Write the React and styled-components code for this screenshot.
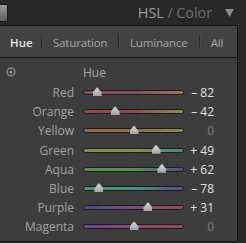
import React from "react";
import styled, { createGlobalStyle } from "styled-components";

const Global = createGlobalStyle`
  html, body { margin: 0; padding: 0; background: #282828; }
  body { width: 246px; height: 243px; overflow: hidden; font-family: "Open Sans", "Liberation Sans", sans-serif; }
`;

const Page = styled.div`
  width: 246px;
  height: 243px;
  background: #282828;
  display: flex;
  flex-direction: column;
`;

const Header = styled.div`
  height: 25px;
  display: flex;
  align-items: center;
`;

const Stub = styled.div`
  width: 7px;
  height: 16px;
  margin-top: 1px;
  background: linear-gradient(#9a9a9a, #5e5e5e);
  border: 1px solid #161616;
  border-left: none;
  border-radius: 0 2px 2px 0;
`;

const Title = styled.div`
  margin-left: auto;
  font-size: 14.5px;
  letter-spacing: -0.1px;
  color: #6f6f6f;
  line-height: 25px;
  margin-top: -1px;
  span { color: #9c9c9c; }
`;

const Arrow = styled.svg`
  margin: 0 12px 0 13px;
  width: 9px;
  height: 8px;
`;

const Panel = styled.div`
  width: 237px;
  border-top: 1px solid #141414;
  border-right: 1px solid #141414;
  border-bottom: 1px solid #141414;
  background: #3d3d3d;
`;

const Tabs = styled.div`
  height: 31px;
  background: #424242;
  border-bottom: 1px solid #161616;
  display: flex;
  align-items: center;
  padding-left: 10px;
`;

const Tab = styled.div`
  width: ${(p) => p.$w}px;
  margin-right: 11px;
  font-size: 11.5px;
  white-space: nowrap;
  letter-spacing: ${(p) => (p.$active ? "0" : "-0.15px")};
  color: ${(p) => (p.$active ? "#e6e6e6" : "#a6a6a6")};
  font-weight: ${(p) => (p.$active ? 600 : 400)};
  margin-top: 1px;
`;

const Sep = styled.div`
  width: 1px;
  height: 14px;
  background: #2c2c2c;
  box-shadow: 1px 0 0 #4a4a4a;
  margin-right: 11px;
`;

const Content = styled.div`
  padding: 6px 0 5px;
  display: grid;
  grid-template-columns: 74px 101px 39px;
  grid-auto-rows: 19.15px;
  align-items: center;
`;

const Label = styled.div`
  font-size: 12px;
  color: #a2a2a2;
  text-align: right;
  width: 74px;
`;

const Icon = styled.svg`
  width: 10px;
  height: 10px;
  margin-left: 6px;
  margin-top: -3px;
`;

const Heading = styled.div`
  font-size: 12px;
  color: #a8a8a8;
  grid-column: 2 / span 2;
  margin-left: 9px;
  margin-top: -2px;
`;

const SliderBox = styled.div`
  position: relative;
  height: 13px;
  margin-left: 9px;
  width: 101px;
  background:
    repeating-linear-gradient(90deg, transparent 0 9px, #343434 9px 10px) 5px 0 / 91px 3px no-repeat,
    repeating-linear-gradient(90deg, transparent 0 9px, #343434 9px 10px) 5px 10px / 91px 3px no-repeat;
`;

const Track = styled.div`
  position: absolute;
  left: 0;
  right: 0;
  top: 4px;
  height: 3px;
  border: 1px solid #1c1c1c;
  border-radius: 3px;
  background: linear-gradient(90deg, ${(p) => p.$from}, ${(p) => p.$mid || p.$from}, ${(p) => p.$to});
`;

const Thumb = styled.div`
  position: absolute;
  top: 1px;
  width: 9px;
  height: 9px;
  margin-left: -4.5px;
  background: linear-gradient(#dcdcdc, #a0a0a0);
  clip-path: polygon(50% 0, 100% 60%, 100% 100%, 0 100%, 0 60%);
`;

const Value = styled.div`
  font-size: 12px;
  text-align: right;
  margin-left: 9px;
  color: ${(p) => (p.$zero ? "#7c7c7c" : "#e2e2e2")};
  white-space: pre;
`;

const rows = [
  { name: "Red", v: -82, from: "#884a5e", to: "#957a5e" },
  { name: "Orange", v: -42, from: "#904a4c", to: "#8a8e4e" },
  { name: "Yellow", v: 0, from: "#8c6a4e", to: "#828e4e" },
  { name: "Green", v: 49, from: "#868e4c", to: "#4c8a80" },
  { name: "Aqua", v: 62, from: "#5a8e4e", to: "#4a528c" },
  { name: "Blue", v: -78, from: "#4c9084", to: "#564c8e" },
  { name: "Purple", v: 31, from: "#4a4a8c", mid: "#844a80", to: "#904a52" },
  { name: "Magenta", v: 0, from: "#6c4a8e", mid: "#8a4a78", to: "#904a50" },
];

const fmt = (v) => (v === 0 ? "0" : v > 0 ? `+ ${v}` : `\u2013 ${-v}`);

export default function App() {
  return (
    <Page>
      <Global />
      <Header>
        <Stub />
        <Title>
          <span>HSL</span> / Color
        </Title>
        <Arrow viewBox="0 0 9 8">
          <polygon points="0,0 9,0 4.5,8" fill="#8c8c8c" />
        </Arrow>
      </Header>
      <Panel>
        <Tabs>
          <Tab $active $w={20}>Hue</Tab>
          <Sep />
          <Tab $w={54}>Saturation</Tab>
          <Sep />
          <Tab $w={59}>Luminance</Tab>
          <Sep />
          <Tab $w={16}>All</Tab>
        </Tabs>
        <Content>
          <Icon viewBox="0 0 10 10">
            <circle cx="5" cy="5" r="4" fill="none" stroke="#8a8a8a" strokeWidth="1.3" />
            <circle cx="5" cy="5" r="1.6" fill="#9a9a9a" />
          </Icon>
          <Heading>Hue</Heading>
          {rows.map((r) => (
            <React.Fragment key={r.name}>
              <Label>{r.name}</Label>
              <SliderBox>
                <Track $from={r.from} $mid={r.mid} $to={r.to} />
                <Thumb style={{ left: `${51 + (45 * r.v) / 100}px` }} />
              </SliderBox>
              <Value $zero={r.v === 0}>{fmt(r.v)}</Value>
            </React.Fragment>
          ))}
        </Content>
      </Panel>
    </Page>
  );
}
